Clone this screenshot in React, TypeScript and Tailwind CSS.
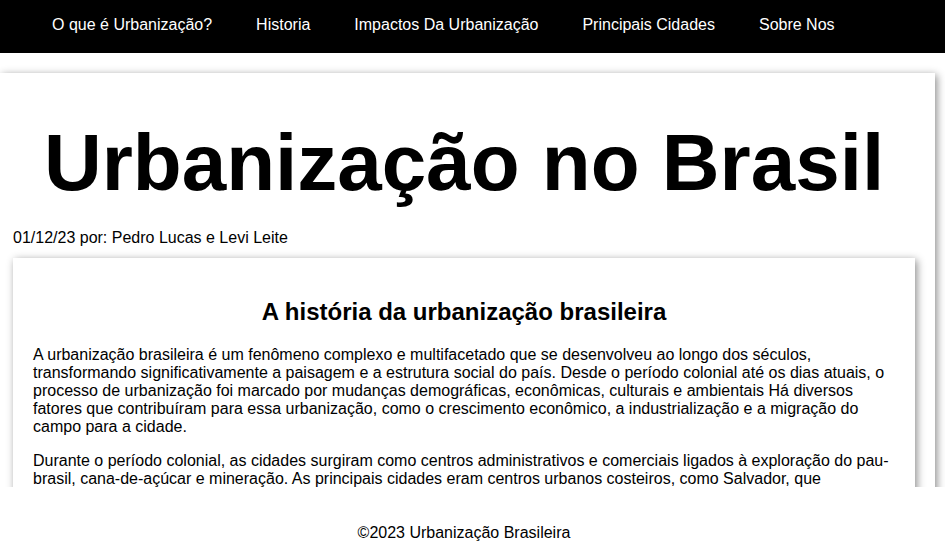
const navLinks = [
  "O que é Urbanização?",
  "Historia",
  "Impactos Da Urbanização",
  "Principais Cidades",
  "Sobre Nos",
];

function NavBar() {
  return (
    <nav className="h-[53px] shrink-0 bg-black flex items-center">
      <ul className="flex gap-[44px] pl-[52px] pb-[4px]">
        {navLinks.map((link) => (
          <li key={link}>
            <a href="#" className="text-white text-[16px]">{link}</a>
          </li>
        ))}
      </ul>
    </nav>
  );
}

function HistoryCard() {
  return (
    <section className="bg-white shadow-[2px_2px_8px_rgba(0,0,0,0.45)] px-[20px] pt-[20px] pb-[20px]">
      <h2 className="text-[24px] font-bold text-center mt-[20px] mb-[20px]">
        A história da urbanização brasileira
      </h2>
      <p className="text-[16px] mb-[16px]">
        A urbanização brasileira é um fenômeno complexo e multifacetado que se desenvolveu ao longo dos séculos,
        transformando significativamente a paisagem e a estrutura social do país. Desde o período colonial até os dias
        atuais, o processo de urbanização foi marcado por mudanças demográficas, econômicas, culturais e ambientais Há
        diversos fatores que contribuíram para essa urbanização, como o crescimento econômico, a industrialização e a
        migração do campo para a cidade.
      </p>
      <p className="text-[16px] mb-[16px]">
        Durante o período colonial, as cidades surgiram como centros administrativos e comerciais ligados à exploração do
        pau-brasil, cana-de-açúcar e mineração. As principais cidades eram centros urbanos costeiros, como Salvador, que
        desempenhava o papel de primeira capital do Brasil, e o Rio de Janeiro, que se tornou capital em 1763. Essas
        cidades cresceram em torno dos portos e das atividades comerciais.
      </p>
      <p className="text-[16px]">
        No século XIX, com o ciclo do café, houve um crescimento das cidades do Sudeste, especialmente São Paulo.
      </p>
    </section>
  );
}

export default function App() {
  return (
    <div className="h-screen flex flex-col bg-white text-black leading-[normal] font-['Liberation_Sans',Arial,sans-serif]">
      <NavBar />
      <main className="flex-1 overflow-hidden pt-[20px]">
        <article className="w-[935px] bg-white shadow-[2px_2px_8px_rgba(0,0,0,0.45)] pl-[13px] pr-[20px] pb-[30px]">
          <h1 className="text-[80px] font-bold text-center pt-[44px] leading-[92px]">
            Urbanização no Brasil
          </h1>
          <p className="text-[16px] mt-[20px] mb-[11px]">01/12/23 por: Pedro Lucas e Levi Leite</p>
          <HistoryCard />
        </article>
      </main>
      <footer className="h-[72px] shrink-0 bg-white pt-[37px] pr-[17px] text-center">
        <p className="text-[16px]">©2023 Urbanização Brasileira</p>
      </footer>
    </div>
  );
}
